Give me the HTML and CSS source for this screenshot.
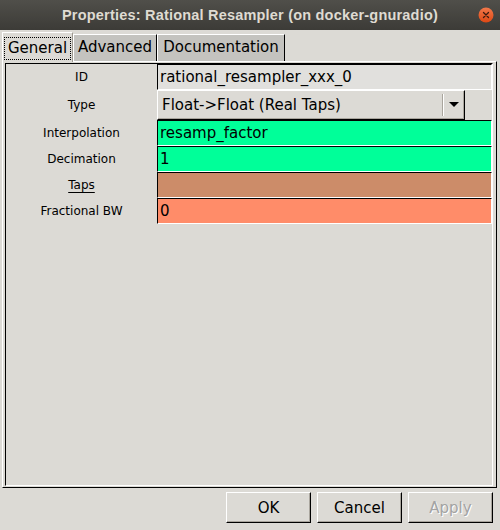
FILE: index.html
```html
<!DOCTYPE html>
<html>
<head>
<meta charset="utf-8">
<link rel="stylesheet" href="styles.css">
</head>
<body>
<div class="titlebar">
  <span></span>
  <span class="title">Properties: Rational Resampler (on docker-gnuradio)</span>
  <span class="close">
    <svg width="16" height="16" viewBox="0 0 16 16">
      <defs>
        <linearGradient id="cg" x1="0" y1="0" x2="0" y2="1">
          <stop offset="0" stop-color="#f2784a"/>
          <stop offset="1" stop-color="#dd4814"/>
        </linearGradient>
      </defs>
      <circle cx="8" cy="8" r="7.5" fill="url(#cg)"/>
      <path d="M5.5 5.5 L10.5 10.5 M10.5 5.5 L5.5 10.5" stroke="#3a1a10" stroke-width="1.3" stroke-linecap="round"/>
    </svg>
  </span>
</div>
<div class="tabs">
  <div class="tab active"><span class="focus">General</span></div>
  <div class="tab tab-adv">Advanced</div>
  <div class="tab tab-doc">Documentation</div>
</div>
<div class="panel">
  <div class="inner">
    <div class="row">
      <div class="label">ID</div>
      <div class="entry ro">rational_resampler_xxx_0</div>
    </div>
    <div class="row row-type">
      <div class="label">Type</div>
      <div class="combo">
        <span class="combo-text">Float-&gt;Float (Real Taps)</span>
        <span class="combo-btn"><span class="sep"></span><span class="arrow"></span></span>
      </div>
    </div>
    <div class="row">
      <div class="label">Interpolation</div>
      <div class="entry int">resamp_factor</div>
    </div>
    <div class="row">
      <div class="label">Decimation</div>
      <div class="entry int">1</div>
    </div>
    <div class="row">
      <div class="label"><span class="ul">Taps</span></div>
      <div class="entry rvec"></div>
    </div>
    <div class="row">
      <div class="label">Fractional BW</div>
      <div class="entry flt">0</div>
    </div>
  </div>
</div>
<div class="buttons">
  <div class="btn">OK</div>
  <div class="btn">Cancel</div>
  <div class="btn disabled">Apply</div>
</div>
</body>
</html>
```
FILE: styles.css
```css
* { box-sizing: border-box; }

body {
  margin: 0;
  width: 500px;
  height: 530px;
  overflow: hidden;
  background: #dcdad5;
  font-family: "DejaVu Sans", sans-serif;
  color: #000;
}

.titlebar {
  height: 30px;
  background: linear-gradient(#504f4a, #3c3b37);
  display: grid;
  grid-template-columns: 30px 1fr 30px;
  align-items: center;
}

.title {
  text-align: center;
  font-family: "Liberation Sans", sans-serif;
  font-weight: bold;
  font-size: 14.5px;
  letter-spacing: 0.2px;
  color: #dfdbd2;
}

.close {
  width: 16px;
  height: 16px;
  margin-left: 8px;
  display: flex;
}

.tabs {
  display: flex;
  align-items: flex-end;
  height: 29px;
  margin-top: 2px;
  padding-left: 2px;
}

.tab {
  height: 27px;
  font-size: 15px;
  line-height: 25px;
  text-align: center;
  background: #c4c3bf;
  border-top: 1px solid #fff;
  border-left: 1px solid #fff;
  border-right: 1px solid #000;
}

.tab-adv { width: 84px; }
.tab-doc { width: 128px; }

.tab.active {
  width: 71px;
  height: 30px;
  margin-bottom: -1px;
  background: #dcdad5;
  border-right: 1px solid #9e9a91;
  position: relative;
  z-index: 1;
  padding-top: 3px;
}

.focus {
  display: inline-block;
  height: 23px;
  line-height: 21px;
  padding: 0 3px;
  border: 1px dotted #000;
}

.panel {
  margin-left: 2px;
  width: 495px;
  height: 427px;
  border-top: 1px solid #fff;
  border-left: 1px solid #fff;
  border-right: 1px solid #000;
  border-bottom: 1px solid #000;
  padding: 1px 3px 1px 2px;
}

.inner {
  height: 100%;
  border-top: 1px solid #000;
  border-left: 1px solid #000;
  border-right: 1px solid #fff;
  border-bottom: 1px solid #fff;
  display: flex;
  flex-direction: column;
}

.row {
  display: grid;
  grid-template-columns: 151px 335px;
  height: 26px;
}

.row-type { height: 30px; }

.label {
  font-size: 12px;
  display: flex;
  align-items: center;
  justify-content: center;
}

.ul {
  text-decoration: underline;
  text-underline-offset: 3px;
}

.entry {
  border-top: 1px solid #000;
  border-left: 1px solid #000;
  border-right: 1px solid #fff;
  border-bottom: 1px solid #fff;
  font-size: 15px;
  padding-left: 2px;
  display: flex;
  align-items: center;
}

.ro { background: #e1e0dd; }
.int { background: #00ff99; }
.rvec { background: #cc8c69; }
.flt { background: #ff8c69; }

.combo {
  width: 308px;
  border-top: 1px solid #fff;
  border-left: 1px solid #fff;
  border-right: 1px solid #000;
  border-bottom: 1px solid #000;
  box-shadow: inset -1px -1px 0 #a9a59d;
  display: flex;
  align-items: center;
  font-size: 15px;
}

.combo-text {
  flex: 1;
  padding-left: 4px;
}

.combo-btn {
  width: 22px;
  height: 100%;
  display: flex;
  align-items: center;
  padding: 2px 0 3px;
}

.sep {
  width: 2px;
  height: 22px;
  border-left: 1px solid #a9a59d;
  border-right: 1px solid #fff;
}

.arrow {
  margin-left: 5px;
  width: 0;
  height: 0;
  border-left: 5px solid transparent;
  border-right: 5px solid transparent;
  border-top: 5px solid #000;
}

.buttons {
  display: flex;
  justify-content: flex-end;
  gap: 6px;
  padding-right: 7px;
  margin-top: 4px;
}

.btn {
  width: 85px;
  height: 31px;
  font-size: 15px;
  display: flex;
  align-items: center;
  justify-content: center;
  border-top: 1px solid #fff;
  border-left: 1px solid #fff;
  border-right: 1px solid #000;
  border-bottom: 1px solid #000;
  box-shadow: inset -1px -1px 0 #a9a59d;
}

.btn.disabled {
  color: #a3a3a3;
  text-shadow: 1px 1px 0 #fff;
}
```
